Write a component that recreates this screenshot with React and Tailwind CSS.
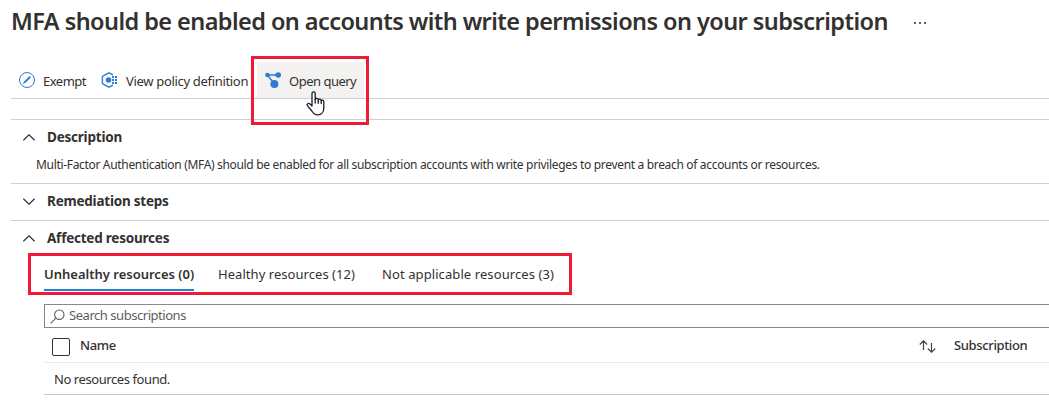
const BLUE = '#2f7bd4';

function ExemptIcon() {
  return (
    <svg width="16" height="16" viewBox="0 0 16 16" fill="none" stroke={BLUE}>
      <circle cx="8" cy="8" r="7.5" strokeWidth="1" />
      <path d="M5.1 10.9 11.2 4.8" strokeWidth="2" />
      <path d="M4.2 11.8 5.6 10.4" strokeWidth="1" />
    </svg>
  );
}

function PolicyIcon() {
  return (
    <svg width="17" height="16" viewBox="0 0 17 16" fill="none">
      <path d="M12 2.800 8 .8 1.400 4.300v7.400l6.600 3.500 4-2" stroke={BLUE} strokeWidth="1.4" />
      <circle cx="7.5" cy="8" r="2.8" fill={BLUE} />
      <g fill={BLUE}>
        <rect x="11" y="4" width="2" height="2" />
        <rect x="14" y="4" width="2" height="2" />
        <rect x="14" y="7" width="2" height="2" />
        <rect x="11" y="7" width="2" height="2" />
        <rect x="14" y="10" width="2" height="2" />
        <rect x="11" y="10" width="2" height="2" />
      </g>
    </svg>
  );
}

function QueryIcon() {
  return (
    <svg width="16" height="16" viewBox="0 0 16 16" fill={BLUE}>
      <path d="M2.5 3H13.5M2.5 3 9.5 12" stroke={BLUE} strokeWidth="1.4" />
      <circle cx="2.4" cy="3" r="2.3" />
      <circle cx="13.2" cy="3" r="2.8" />
      <circle cx="9.4" cy="12" r="4" />
    </svg>
  );
}

function Chevron({ up }) {
  return (
    <svg width="12" height="7" viewBox="0 0 12 7" fill="none" stroke="#323130" strokeWidth="1.2">
      <path d={up ? 'M.4 6.3 6 .8l5.6 5.5' : 'M.4.7 6 6.2 11.6.7'} />
    </svg>
  );
}

function HandCursor() {
  return (
    <svg width="19" height="25" viewBox="0 0 19 25" fill="#fff" stroke="#1b1b2b" strokeWidth="1.3" strokeLinejoin="round" strokeLinecap="round">
      <path d="M6 14.5V2.6C6 .3 9.2.3 9.2 2.6V8.4C9.5 6.7 12.3 7 12.3 8.9C12.8 7.6 15.2 8 15.2 9.7C15.7 8.7 17.8 9 17.8 10.9V17C17.8 21 15.5 23.9 11.7 23.9C8.5 23.9 7.3 22.5 5.8 20L1.4 14.6C.5 13 2.5 11.6 3.9 12.9L6 15" />
      <path d="M9.2 8.4V12M12.3 8.9V12.3M15.2 9.7V12.6" />
    </svg>
  );
}

function SectionHeader({ up, children }) {
  return (
    <div className="flex h-[35px] items-center pl-3">
      <Chevron up={up} />
      <h2 className="ml-3 pb-0.5 text-[13.5px] leading-5 font-bold tracking-[-0.22px]">{children}</h2>
    </div>
  );
}

export default function App() {
  return (
    <div className="relative h-[413px] w-[1049px] overflow-hidden bg-white font-['Noto_Sans',sans-serif] text-[13px] leading-5 whitespace-nowrap text-[#323130]">
      <header className="flex h-[62px] items-start pl-[11px]">
        <h1 className="mt-[5px] w-[877px] text-[23.5px] leading-8 font-semibold tracking-[-0.57px]">
          MFA should be enabled on accounts with write permissions on your subscription
        </h1>
        <div className="mt-[22px] ml-[26px] flex gap-[3px]">
          <i className="size-[2px] bg-[#605e5c]" />
          <i className="size-[2px] bg-[#605e5c]" />
          <i className="size-[2px] bg-[#605e5c]" />
        </div>
      </header>

      <main className="ml-[11px]">
        <div className="flex h-[37px] border-b border-[#d2d0ce] tracking-[-0.5px]">
          <button className="flex w-[82px] items-center gap-2 pl-2"><ExemptIcon /><span className="pt-0.5">Exempt</span></button>
          <button className="flex w-[164px] items-center gap-2 pl-2"><PolicyIcon /><span className="pt-0.5 tracking-[-0.32px]">View policy definition</span></button>
          <button className="flex w-[107px] items-center gap-2 bg-[#f3f2f1] pl-2"><QueryIcon /><span className="pt-0.5">Open query</span></button>
        </div>

        <section className="mt-5 h-[65px] border-y border-[#d2d0ce]">
          <SectionHeader up>Description</SectionHeader>
          <p className="pl-[25px] text-[12px] leading-5 tracking-[-0.325px]">
            Multi-Factor Authentication (MFA) should be enabled for all subscription accounts with write privileges to prevent a breach of accounts or resources.
          </p>
        </section>

        <section className="h-[37px] border-b border-[#d2d0ce]">
          <SectionHeader>Remediation steps</SectionHeader>
        </section>

        <section>
          <SectionHeader up>Affected resources</SectionHeader>
          <div className="pt-px pl-[33px]">
            <nav className="flex h-[34px] gap-6">
              <span className="w-[150px] border-b-2 border-[#2f7bd4] pt-[7px] font-semibold">Unhealthy resources (0)</span>
              <span className="w-[140px] pt-[7px] tracking-[0.05px]">Healthy resources (12)</span>
              <span className="pt-[7px] tracking-[0.09px]">Not applicable resources (3)</span>
            </nav>
            <div className="mt-[13px] flex h-6 items-center border border-r-0 border-[#8a8886] pl-[5px] text-[#605e5c]">
              <svg width="15" height="15" viewBox="0 0 15 15" fill="none" stroke="#605e5c" strokeWidth="1.1">
                <circle cx="9.3" cy="5.7" r="4.7" />
                <path d="M5.9 9.1.6 14.4" />
              </svg>
              <span className="ml-1 pb-0.5 tracking-[-0.46px]">Search subscriptions</span>
            </div>
            <div className="flex h-[35px] border-b border-[#edebe9] pt-[7px] pl-2 font-medium tracking-[-0.36px]">
              <span className="mt-[3px] size-[18px] rounded-[2px] border border-[#323130]" />
              <span className="ml-[10px] w-[839px]">Name</span>
              <svg className="mt-[5px] mr-[18px]" width="17" height="13" viewBox="0 0 17 13" fill="none" stroke="#484644" strokeWidth="1.2">
                <path d="M4.5 10V1M.8 4.5 4.5.8 8.2 4.5M12.5 3v9M8.8 8.5l3.7 3.7 3.7-3.7" />
              </svg>
              <span>Subscription</span>
            </div>
            <div className="h-8 border-b border-[#c8c6c4] pt-[6px] pl-[10px] tracking-[-0.42px]">No resources found.</div>
          </div>
        </section>
      </main>

      <div className="absolute top-[56px] left-[251px] h-[69px] w-[118px] border-3 border-[#f01a37]" />
      <div className="absolute top-[253px] left-[28px] h-[42px] w-[544px] border-3 border-[#f01a37]" />
      <div className="absolute top-[91px] left-[306px]"><HandCursor /></div>
    </div>
  );
}
